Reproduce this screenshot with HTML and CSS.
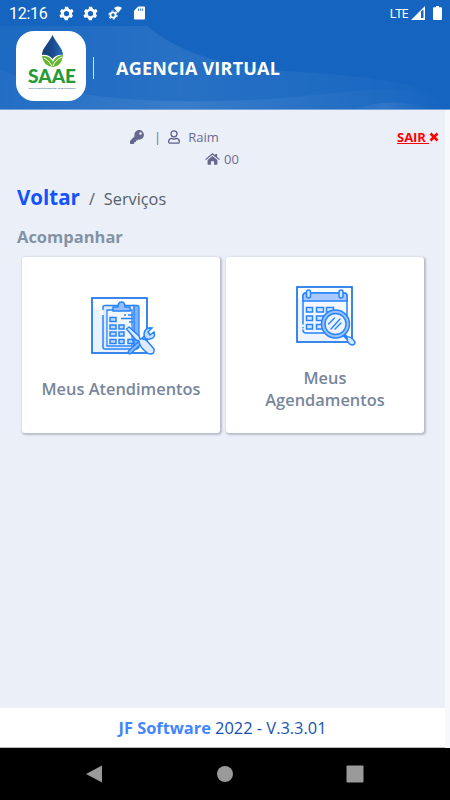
FILE: index.html
```
<!DOCTYPE html>
<html lang="pt-br">
<head>
  <meta charset="UTF-8">
  <meta name="viewport" content="width=device-width, initial-scale=1.0">
  <title>Agencia Virtual</title>
  <link rel="stylesheet" href="styles.css">
</head>
<body>

  <!-- Barra de status -->
  <div class="status-bar">
    <span class="clock">12:16</span>
    <svg class="status-icon gear" viewBox="2 2 20 20"><path fill-rule="evenodd" d="M19.4 13a7.500 7.500 0 0 0 0-2l2.100-1.600-2-3.500-2.500 1a7.500 7.500 0 0 0-1.700-1L14 3h-4l-.4 2.900a7.500 7.500 0 0 0-1.700 1l-2.500-1-2 3.500L4.600 11a7.500 7.500 0 0 0 0 2l-2.200 1.600 2 3.500 2.500-1a7.500 7.500 0 0 0 1.700 1L10 21h4l.4-2.900a7.500 7.500 0 0 0 1.700-1l2.500 1 2-3.500zM12 15.500a3.500 3.500 0 1 1 0-7 3.500 3.500 0 0 1 0 7z"/></svg>
    <svg class="status-icon gear" viewBox="2 2 20 20"><path fill-rule="evenodd" d="M19.4 13a7.500 7.500 0 0 0 0-2l2.100-1.600-2-3.500-2.500 1a7.500 7.500 0 0 0-1.700-1L14 3h-4l-.4 2.900a7.500 7.500 0 0 0-1.700 1l-2.500-1-2 3.500L4.600 11a7.500 7.500 0 0 0 0 2l-2.200 1.600 2 3.500 2.500-1a7.500 7.500 0 0 0 1.700 1L10 21h4l.4-2.900a7.500 7.500 0 0 0 1.700-1l2.500 1 2-3.500zM12 15.500a3.500 3.500 0 1 1 0-7 3.500 3.500 0 0 1 0 7z"/></svg>
    <svg class="status-icon wifi" viewBox="0 0 14 14">
      <path d="M6 2Q10-.8 14 2L10 7z"/>
      <circle cx="5" cy="9" r="2.600" fill="none" stroke="#fff" stroke-width="1.800"/>
      <circle cx="5" cy="9" r="4" fill="none" stroke="#fff" stroke-width="1.200" stroke-dasharray="2 2.190"/>
    </svg>
    <svg class="status-icon sd" viewBox="0 0 12 14"><path fill-rule="evenodd" d="M4.500 0H11q1 0 1 1v12q0 1-1 1H1q-1 0-1-1V4.500zM4.500 2v2.500h1V2zm2.300 0v2.500h1V2zM9 2v2.500h1V2z"/></svg>
    <span class="network">LTE</span>
    <svg class="status-icon signal" viewBox="0 0 14 14"><path fill-rule="evenodd" d="M14 0v14H0zM10 5.500V12h2.500V3.500z"/></svg>
    <svg class="status-icon battery" viewBox="0 0 9 14"><path d="M3 0h3v1.300h2q1 0 1 1V13q0 1-1 1H1q-1 0-1-1V2.300q0-1 1-1h2z"/></svg>
  </div>

  <!-- Cabecalho -->
  <header class="header">
    <svg class="header-waves" viewBox="0 0 450 83" preserveAspectRatio="none">
      <defs>
        <linearGradient id="wave" x1="0" y1="0" x2="1" y2="0">
          <stop offset="0" stop-color="#fff" stop-opacity=".03"/>
          <stop offset=".4" stop-color="#fff" stop-opacity=".08"/>
          <stop offset="1" stop-color="#fff" stop-opacity="0"/>
        </linearGradient>
      </defs>
      <path fill="url(#wave)" d="M0 0H147C175 24 220 41 285 45C350 49 425 55 450 77V83H0z"/>
      <path fill="url(#wave)" d="M0 43C65 75 150 76 225 75C310 73 345 62 400 64Q432 68 450 83H0z"/>
      <path fill="url(#wave)" d="M355 83Q390 70 433 83z"/>
    </svg>
    <div class="logo">
      <svg viewBox="0 0 70 70">
        <defs>
          <linearGradient id="drop" x1="0" y1="0" x2="1" y2="0">
            <stop offset="0" stop-color="#153c78"/>
            <stop offset=".5" stop-color="#194b8e"/>
            <stop offset="1" stop-color="#2a6cbb"/>
          </linearGradient>
        </defs>
        <path fill="url(#drop)" d="M36.500 4C33 12 26 17 26 24Q32 23 36.500 28Q41 23 47 24C47 17 40 12 36.500 4z"/>
        <path fill="#65b532" d="M26 25Q34 24 37 31Q40 24 47 24Q46 35 37 36Q27 35 26 25z"/>
        <path fill="none" stroke="#fff" stroke-width="1" d="M28 27Q33 29 36 35M46 26Q39 29 37 35"/>
        <text class="logo-name" x="12" y="51.500" textLength="48" lengthAdjust="spacingAndGlyphs">SAAE</text>
        <text class="logo-sub" x="12.500" y="57.500" textLength="47" lengthAdjust="spacingAndGlyphs">SERVIÇO AUTÔNOMO DE ÁGUA E ESGOTO</text>
      </svg>
    </div>
    <span class="header-line"></span>
    <h1>AGENCIA VIRTUAL</h1>
  </header>

  <main class="content">
    <div class="user-info">
      <div class="user-row">
        <svg class="key" viewBox="0 0 512 512"><path d="M512 176a176 176 0 0 1-215 172l-24 27a24 24 0 0 1-18 8h-39v40a24 24 0 0 1-24 24h-40v41a24 24 0 0 1-24 24H24a24 24 0 0 1-24-24v-78a24 24 0 0 1 7-17l162-162A176 176 0 1 1 512 176zM336 128a48 48 0 1 0 96 0 48 48 0 0 0-96 0z" fill-rule="evenodd"/></svg>
        <span class="pipe">|</span>
        <svg class="person" viewBox="0 0 12 14"><circle cx="6" cy="3.800" r="3"/><path d="M3.300 8.400Q6 9.600 8.700 8.400Q11.300 8.900 11.300 11.500V12q0 1.200-1.200 1.200H1.900Q.7 13.200.7 12v-.5Q.7 8.900 3.300 8.400z"/></svg>
        <span class="user-name">Raim</span>
      </div>
      <div class="home-row">
        <svg class="home" viewBox="0 0 16 13"><path d="M8 3.200l5.300 4.500V12q0 .7-.7.7H9.700V9H6.300v3.700H3.400q-.7 0-.7-.7V7.700z"/><path d="M8 0L11 2.500V1h2v3.200l3 2.500-.9 1L8 1.900.9 7.700 0 6.700z"/></svg>
        <span>00</span>
      </div>
      <a class="logout" href="#"><span>SAIR&nbsp;</span><svg viewBox="0 0 10 10"><path d="M1.500 1.500l7 7M8.500 1.500l-7 7"/></svg></a>
    </div>

    <nav class="breadcrumb">
      <a href="#">Voltar</a>
      <span class="slash">/</span>
      <span>Serviços</span>
    </nav>

    <h2>Acompanhar</h2>

    <div class="cards">
      <a class="card" href="#">
        <!-- prancheta com ferramentas -->
        <svg class="card-icon list-icon" viewBox="0 0 65 62">
          <rect x="1" y="3" width="55" height="55" fill="#eaf1ff" stroke="#1a73e8" stroke-width="1.700"/>
          <path fill="#fff" d="M2 10l40 47H55V4H2z"/>
          <path fill="#81b1ff" stroke="#2584ff" stroke-width="1.300" d="M42 10.500h4q2 0 2 2V51q0 3-3 3h-6z"/>
          <path fill="#dfe9fb" stroke="#2584ff" stroke-width="1.500" d="M12 15v-2.500Q12 10.500 14 10.500H43V54H14q-2 0-2-2V20"/>
          <path fill="#f2f5fb" stroke="#2584ff" stroke-width="1.300" d="M16 15h25v36H16z"/>
          <path fill="#97bdff" stroke="#2584ff" stroke-width="1.400" d="M22 12h5q0-5 3.500-5t3.500 5h5v4H22z"/>
          <g fill="#c4d9ff" stroke="#2584ff" stroke-width="1.500">
            <path d="M19 22.500h6v4h-6zM19 30h6v4h-6zM28 30h5v4h-5zM19 37h6v4h-6zM28 37h5v4h-5zM19 44.500h6v4h-6zM28 44.500h5v4h-5zM37 44.500h5v4h-5z"/>
          </g>
          <path fill="none" stroke="#2584ff" stroke-width="1.500" d="M33 20h2M37 20h5M30 23.500h12M38 27h4"/>
          <path stroke="#2584ff" stroke-width="5" stroke-linecap="round" d="M39 57l18-17"/>
          <path stroke="#91b8ff" stroke-width="2" stroke-linecap="round" d="M39 57l18-17"/>
          <path fill="#c7dcff" stroke="#2584ff" stroke-width="1.500" d="M61 33l-4 4 2 3 4-3q2 6-4 7-6 1-6-5 1-7 8-6z"/>
          <path fill="#e1ebff" stroke="#2584ff" stroke-width="1.500" stroke-linejoin="round" d="M35.500 34l2.500-2 10 9 1 3q5-1 8 3l6 7q1 5-4 5-2 0-5-3-6-5-6-10l-3-1z"/>
        </svg>
        <span>Meus Atendimentos</span>
      </a>
      <a class="card" href="#">
        <!-- calendario com lupa -->
        <svg class="card-icon calendar-icon" viewBox="0 0 65 62">
          <rect x="1" y="1" width="55" height="55" fill="#eef4ff" stroke="#1a73e8" stroke-width="1.700"/>
          <path fill="#fff" d="M2 11l43 44H55V2H2z"/>
          <path fill="#f4f7fe" stroke="#2584ff" stroke-width="1.500" stroke-linecap="round" d="M7 38V10q0-3 3-3h38q3 0 3 3v32M7 41.500v.2M7 44q0 3 3 3h32"/>
          <path fill="#a9c9ff" stroke="#2584ff" stroke-width="1.500" d="M7 15v-5q0-3 3-3h38q3 0 3 3v5z"/>
          <g fill="#d7e6ff" stroke="#2584ff" stroke-width="1.500">
            <rect x="10.500" y="4" width="4" height="8" rx="2"/>
            <rect x="43" y="4" width="4" height="8" rx="2"/>
            <path d="M10.500 21.500h6v4.500h-6zM20.500 21.500h7v4.500h-7zM30.500 21.500h7v4.500h-7zM10.500 30h6v4.500h-6zM20.500 30h7v4.500h-7zM10.500 38.500h6v4.500h-6zM20.500 38.500h7v4.500h-7z"/>
          </g>
          <path stroke="#2584ff" stroke-width="3.500" d="M48 49l5 5"/>
          <path fill="#d7e6ff" stroke="#2584ff" stroke-width="1.400" d="M51 51q4-1 8 5 0 3-3 3-5-1-5-8z"/>
          <circle cx="39.500" cy="38" r="14" fill="#9bc2ff" stroke="#2584ff" stroke-width="1.500"/>
          <circle cx="39.500" cy="38" r="10.500" fill="#edf3ff" stroke="#2584ff" stroke-width="1.400"/>
          <path stroke="#2584ff" stroke-width="1.400" stroke-linecap="round" d="M32.500 38l6-6M35 43l9-10M39 43l6-6"/>
        </svg>
        <span>Meus<br>Agendamentos</span>
      </a>
    </div>
  </main>

  <footer class="footer"><b>JF Software</b>&nbsp;2022 - V.3.3.01</footer>

  <!-- Navegacao do sistema -->
  <div class="system-nav">
    <svg viewBox="0 0 18 18"><path d="M0 9L16 .5v17z"/></svg>
    <svg viewBox="0 0 18 18"><circle cx="9" cy="9" r="8"/></svg>
    <svg viewBox="0 0 18 18"><rect x=".5" y=".5" width="17" height="17" rx="1"/></svg>
  </div>

</body>
</html>
```
FILE: styles.css
```
* {
  box-sizing: border-box;
}

body {
  margin: 0;
  width: 450px;
  height: 800px;
  display: flex;
  flex-direction: column;
  overflow: hidden;
  background-color: #f7f8fc;
  font-family: "Open Sans", sans-serif;
}

a {
  text-decoration: none;
}

svg {
  display: block;
  flex: none;
}

.status-bar {
  height: 26px;
  display: flex;
  align-items: center;
  padding: 0 8px 0 9px;
  background-color: #1565c0;
  color: #fff;
}

.clock {
  font-family: Roboto, sans-serif;
  font-size: 16px;
  width: 50px;
  letter-spacing: -0.3px;
  padding-top: 1px;
}

.status-icon {
  fill: #fff;
  height: 14px;
}

.gear {
  width: 15px;
  height: 15px;
  margin-right: 9px;
}

.wifi {
  width: 14px;
  margin-left: 1px;
}

.sd {
  width: 11px;
  margin-left: 12px;
}

.network {
  margin-left: auto;
  font-family: "Noto Sans", sans-serif;
  font-size: 13px;
  letter-spacing: -0.8px;
}

.signal {
  width: 14px;
  margin-left: 3px;
}

.battery {
  width: 9px;
  margin-left: 8px;
}

.header {
  position: relative;
  height: 84px;
  display: flex;
  align-items: flex-start;
  padding: 5px 16px;
  background-color: #1565c0;
  border-bottom: 1px solid #74a0dc;
  color: #fff;
}

.header-waves {
  position: absolute;
  left: 0;
  top: 0;
  width: 450px;
  height: 83px;
}

.logo {
  position: relative;
  width: 70px;
  height: 70px;
  border-radius: 18px;
  background-color: #fff;
}

.logo-name {
  font-family: Lato, sans-serif;
  font-size: 18.5px;
  font-weight: 900;
  fill: #249b35;
}

.logo-sub {
  font-family: Roboto, sans-serif;
  font-size: 2.4px;
  fill: #315486;
}

.header-line {
  position: relative;
  width: 1px;
  height: 22px;
  margin: 26px 22px 0 7px;
  background-color: #d4e4f7;
}

.header h1 {
  position: relative;
  margin: 25px 0 0;
  font-size: 18px;
  line-height: 25px;
  letter-spacing: 0.22px;
}

.content {
  width: 445px;
  height: 598px;
  background-color: #ebeff8;
}

.user-info {
  position: relative;
  height: 76px;
  padding-top: 16px;
  font-size: 13px;
  color: #6b6c91;
}

.user-row,
.home-row {
  display: flex;
  align-items: center;
  height: 22px;
}

.user-row {
  padding-left: 130px;
}

.key {
  width: 14px;
  height: 14px;
  fill: #66678f;
}

.pipe {
  margin: 0 7px 0 10px;
}

.person {
  width: 12px;
  height: 14px;
  margin-right: 8px;
  fill: none;
  stroke: #5b5c8b;
  stroke-width: 1.3;
}

.home-row {
  padding-left: 205px;
}

.home {
  width: 15px;
  height: 12px;
  margin-right: 4px;
  fill: #66678f;
}

.logout {
  position: absolute;
  right: 6px;
  top: 17px;
  height: 20px;
  display: flex;
  align-items: center;
  font-size: 13px;
  font-weight: 700;
  color: #f00;
}

.logout span {
  text-decoration: underline;
  letter-spacing: -0.1px;
}

.logout svg {
  width: 10px;
  height: 10px;
  stroke: #f00;
  stroke-width: 2.6;
}

.breadcrumb {
  display: flex;
  align-items: baseline;
  padding-left: 17px;
  height: 39px;
  font-size: 16.3px;
  color: #566068;
}

.breadcrumb a {
  font-size: 20.5px;
  line-height: 22px;
  font-weight: 700;
  color: #1453fa;
}

.slash {
  margin: 0 9px 0 9px;
}

.breadcrumb span {
  line-height: 20px;
}

h2 {
  margin: 0 0 8px 17px;
  font-size: 16.5px;
  line-height: 24px;
  color: #8492a5;
}

.cards {
  display: flex;
  gap: 6px;
  padding-left: 22px;
}

.card {
  width: 198px;
  height: 176px;
  display: flex;
  flex-direction: column;
  align-items: center;
  background-color: #fff;
  border-radius: 3px;
  box-shadow: 1px 1px 2px 1px #b8bdc8;
  color: #78869b;
  font-size: 16.4px;
  font-weight: 600;
  line-height: 22px;
  text-align: center;
}

.card-icon {
  width: 65px;
  height: 62px;
  fill: none;
}

.list-icon {
  margin: 38px 0 21px 5px;
}

.calendar-icon {
  margin: 29px 0 19px 7px;
}

.footer {
  width: 445px;
  height: 40px;
  display: flex;
  align-items: center;
  justify-content: center;
  background-color: #fff;
  border-bottom: 1px solid #bbb;
  font-size: 16.4px;
  color: #1550b5;
}

.footer b {
  color: #4285ff;
}

.system-nav {
  height: 52px;
  display: flex;
  justify-content: center;
  gap: 112px;
  padding-top: 17px;
  background-color: #000;
}

.system-nav svg {
  width: 18px;
  height: 18px;
  fill: #9a9a9a;
}
```
